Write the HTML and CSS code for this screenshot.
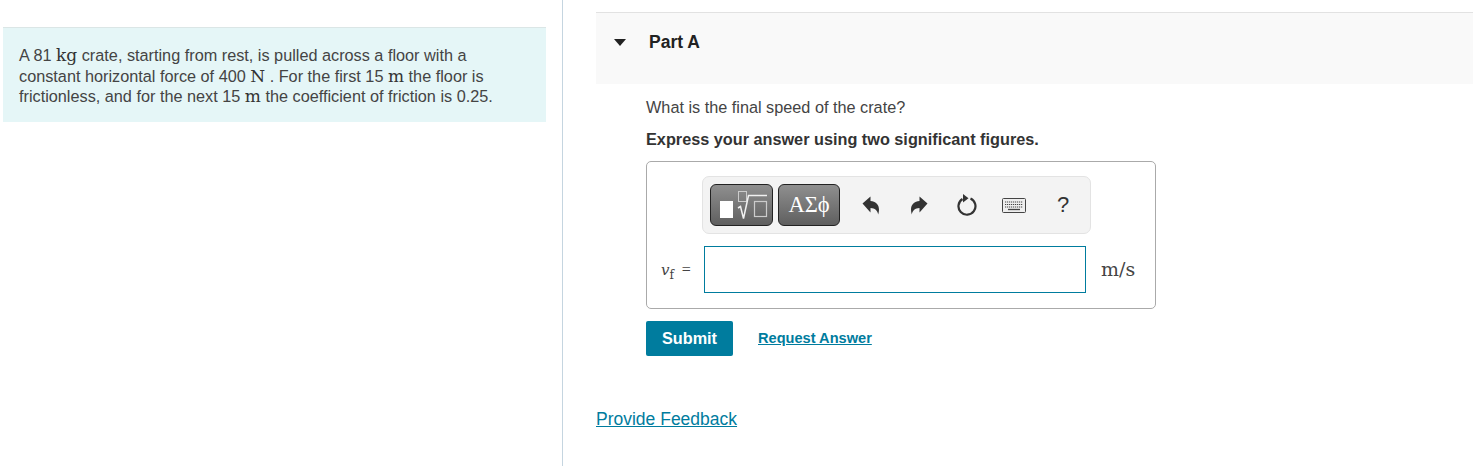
FILE: index.html
```html
<!DOCTYPE html>
<html lang="en">
<head>
    <meta charset="UTF-8">
    <title>Part A</title>
    <link rel="stylesheet" href="styles.css">
</head>
<body>
    <div class="page">
        <div class="left">
            <div class="intro">
                <p>A 81 <span class="unit">kg</span> crate, starting from rest, is pulled across a floor with a</p>
                <p>constant horizontal force of 400 <span class="unit">N</span> . For the first 15 <span class="unit">m</span> the floor is</p>
                <p>frictionless, and for the next 15 <span class="unit">m</span> the coefficient of friction is 0.25.</p>
            </div>
        </div>
        <div class="right">
            <div class="part-head">
                <span class="arrow"></span>
                <h2>Part A</h2>
            </div>
            <div class="part-body">
                <p class="question">What is the final speed of the crate?</p>
                <p class="express">Express your answer using two significant figures.</p>
                <div class="answer">
                    <div class="toolbar">
                        <button class="tool tool-math" aria-label="Templates">
                            <svg width="61" height="40" viewBox="0 0 61 40">
                                <rect x="9" y="16" width="13" height="17" fill="#fff"/>
                                <rect x="27.500" y="6.500" width="8" height="10" fill="none" stroke="#ccc"/>
                                <path d="M27 23l2.500-1.500 3 12L37.500 10.500h18.500" fill="none" stroke="#f0f0f0" stroke-width="1.500"/>
                                <rect x="43.500" y="16.500" width="12" height="15" fill="none" stroke="#ccc" stroke-width="1.200"/>
                            </svg>
                        </button>
                        <button class="tool tool-greek">ΑΣϕ</button>
                        <span class="icon undo">
                            <svg width="18" height="19" viewBox="0 0 18 19"><path d="M0.500 7.500L8.500 0.500v4.500c5 .2 8.500 3.500 8.500 8.500 0 1.800-.3 3.500-.8 5-.8-3.800-3.200-6.300-7.700-6.400v4.400z" fill="#333"/></svg>
                        </span>
                        <span class="icon redo">
                            <svg width="18" height="19" viewBox="0 0 18 19"><path d="M17.500 7.500L9.500 0.500v4.500c-5 .2-8.500 3.500-8.500 8.500 0 1.800.3 3.500.8 5 .8-3.800 3.200-6.300 7.700-6.400v4.400z" fill="#333"/></svg>
                        </span>
                        <span class="icon reset">
                            <svg width="20" height="22" viewBox="0 0 20 22"><path d="M5.500 5a8.500 8.500 0 1 0 8 -.5" fill="none" stroke="#333" stroke-width="2.200"/><path d="M6 0v8.500l5.500-4.300z" fill="#333"/></svg>
                        </span>
                        <span class="icon keyboard">
                            <svg width="24" height="15" viewBox="0 0 24 15">
                                <rect x=".5" y=".5" width="23" height="14" rx="1" fill="#eee" stroke="#444"/>
                                <path d="M3 4h18M3 6.500h18M3 9h18" stroke="#444" stroke-width="1.200" stroke-dasharray="1.200 .8"/>
                                <path d="M6 11.500h12" stroke="#444" stroke-width="1.300"/>
                            </svg>
                        </span>
                        <span class="icon help">?</span>
                    </div>
                    <div class="answer-row">
                        <span class="label"><i>v</i><sub>f</sub> <span class="equals">=</span></span>
                        <input class="answer-input" type="text">
                        <span class="units">m/s</span>
                    </div>
                </div>
                <div class="actions">
                    <button class="submit">Submit</button>
                    <a class="request" href="#">Request Answer</a>
                </div>
            </div>
            <a class="feedback" href="#">Provide Feedback</a>
        </div>
    </div>
</body>
</html>
```

FILE: styles.css
```css
* {
    margin: 0;
    padding: 0;
    box-sizing: border-box;
}
body {
    font-family: "Liberation Sans", Arial, sans-serif;
    font-size: 16.250px;
    color: #444;
    background-color: #fff;
}
.page {
    display: flex;
    height: 466px;
    overflow: hidden;
}
.left {
    width: 563px;
    flex-shrink: 0;
    padding: 27px 16px 0 3px;
    border-right: 1px solid #c5d5e0;
}
.intro {
    height: 95px;
    padding: 17px 16px 0;
    background-color: #e5f6f7;
    border-top: 1px solid #dbe6e6;
    line-height: 20.500px;
}
.unit {
    font-family: "DejaVu Serif", serif;
    font-size: 17px;
    line-height: 1;
    color: #333;
}
.right {
    flex: 1;
    padding: 12px 0 0 33px;
}
.part-head {
    display: flex;
    align-items: center;
    height: 72px;
    padding: 0 0 13px 18px;
    background-color: #f9f9f9;
    border-top: 1px solid #e2e2e2;
}
.arrow {
    width: 0;
    height: 0;
    border-left: 6.500px solid transparent;
    border-right: 6.500px solid transparent;
    border-top: 7px solid #222;
    margin-right: 23px;
}
h2 {
    font-size: 17.500px;
    font-weight: bold;
    color: #222;
}
.part-body {
    padding: 14px 0 0 50px;
}
.question {
    line-height: 18px;
}
.express {
    margin-top: 14px;
    font-weight: bold;
    line-height: 18px;
    color: #333;
}
.answer {
    width: 510px;
    height: 148px;
    margin-top: 13px;
    padding-top: 14px;
    border: 1px solid #aaa;
    border-radius: 5px;
}
.toolbar {
    display: flex;
    align-items: center;
    width: 389px;
    height: 58px;
    margin-left: 55px;
    padding-left: 7px;
    background-color: #f3f3f3;
    border: 1px solid #e3e3e3;
    border-radius: 7px;
}
.tool {
    height: 42px;
    border: 1px solid #222;
    border-radius: 6px;
    background: linear-gradient(#8f8f8f, #5f5f5f);
    color: #fff;
    cursor: pointer;
}
.tool-math {
    width: 63px;
    margin-right: 5px;
}
.tool-math svg {
    display: block;
}
.tool-greek {
    width: 62px;
    font-family: "Liberation Serif", serif;
    font-size: 22.500px;
    font-weight: normal;
}
.icon {
    display: flex;
    align-items: center;
    justify-content: center;
    color: #333;
}
.undo {
    margin-left: 22px;
}
.redo {
    margin-left: 30px;
}
.reset {
    margin-left: 29px;
}
.keyboard {
    margin-left: 25px;
}
.help {
    margin-left: 31px;
    font-size: 22px;
}
.answer-row {
    display: flex;
    align-items: center;
    margin-top: 12px;
}
.label {
    width: 57px;
    padding-left: 14px;
    font-family: "DejaVu Serif", serif;
    font-size: 15px;
    white-space: nowrap;
}
.label sub {
    font-size: 12px;
    line-height: 0;
}
.equals {
    margin-left: 3px;
    font-family: "Liberation Serif", serif;
    font-size: 16px;
}
.answer-input {
    width: 382px;
    height: 47px;
    border: 1px solid #007c9e;
    background-color: #fff;
}
.units {
    margin-left: 15px;
    padding-bottom: 2px;
    font-family: "DejaVu Serif", serif;
    font-size: 19px;
    color: #444;
}
.actions {
    display: flex;
    align-items: center;
    margin-top: 12px;
}
.submit {
    width: 87px;
    height: 35px;
    border: none;
    border-radius: 2px;
    background-color: #007c9e;
    color: #fff;
    font-family: "Liberation Sans", Arial, sans-serif;
    font-size: 16.250px;
    font-weight: bold;
    cursor: pointer;
}
.request {
    margin-left: 25px;
    padding-bottom: 2px;
    font-size: 14.600px;
    font-weight: bold;
    color: #007c9e;
}
.feedback {
    display: inline-block;
    margin-top: 53px;
    font-size: 17.500px;
    color: #007c9e;
}
```
